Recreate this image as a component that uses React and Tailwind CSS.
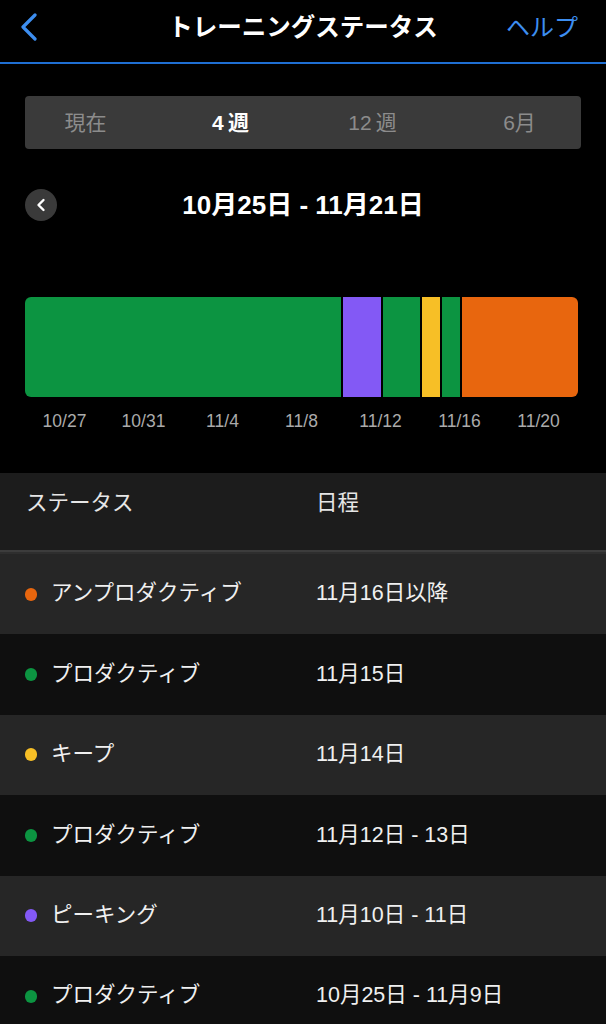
import React from 'react';

const FONT = { fontFamily: '"Liberation Sans", "Noto Sans CJK JP", sans-serif' };

const segments = [
  { days: 16, color: 'bg-[#0c9441]', round: 'rounded-l-[6px]' },
  { days: 2, color: 'bg-[#8359f5] border-l-[2px] border-black', round: '' },
  { days: 2, color: 'bg-[#0c9441] border-l-[2px] border-black', round: '' },
  { days: 1, color: 'bg-[#f7bf26] border-l-[2px] border-black', round: '' },
  { days: 1, color: 'bg-[#0c9441] border-l-[2px] border-black', round: '' },
  { days: 6, color: 'bg-[#e8660e] border-l-[2px] border-black', round: 'rounded-r-[6px]' },
];

const ticks = ['10/27', '10/31', '11/4', '11/8', '11/12', '11/16', '11/20'];

const rows = [
  { dot: 'bg-[#e8660e]', label: 'アンプロダクティブ', date: '11月16日以降' },
  { dot: 'bg-[#0c9441]', label: 'プロダクティブ', date: '11月15日' },
  { dot: 'bg-[#f7bf26]', label: 'キープ', date: '11月14日' },
  { dot: 'bg-[#0c9441]', label: 'プロダクティブ', date: '11月12日 - 13日' },
  { dot: 'bg-[#8359f5]', label: 'ピーキング', date: '11月10日 - 11日' },
  { dot: 'bg-[#0c9441]', label: 'プロダクティブ', date: '10月25日 - 11月9日' },
];

export default function App() {
  return (
    <div className="w-[606px] h-[1024px] overflow-hidden bg-black text-white" style={FONT}>
      {/* nav bar */}
      <div className="h-[62px] grid grid-cols-[1fr_auto_1fr] items-center px-[20px]">
        <svg width="18" height="30" viewBox="0 0 18 30" className="-mt-[6px]">
          <polyline points="15,2 3,14 15,26" fill="none" stroke="#3d8ef0" strokeWidth="3.2" strokeLinecap="round" strokeLinejoin="round" />
        </svg>
        <div className="text-[24.5px] font-bold leading-none -mt-[6px]">トレーニングステータス</div>
        <div className="text-[24px] leading-none text-[#3d8ef0] -mt-[6px] mr-[8px] text-right">ヘルプ</div>
      </div>
      <div className="h-[2px] bg-[#1f6fd3]" />

      {/* range tabs */}
      <div className="px-[25px] pt-[32px]">
        <div className="h-[53px] rounded-[4px] bg-[#3a3a3a] grid grid-cols-4 items-center text-[21px] leading-none">
          <div className="text-center text-[#8c8c8c] -ml-[18px]">現在</div>
          <div className="text-center font-bold text-white -ml-[6px]">4&#8201;週</div>
          <div className="text-center text-[#8c8c8c]">12&#8201;週</div>
          <div className="text-center text-[#8c8c8c] ml-[16px]">6月</div>
        </div>
      </div>

      {/* date range */}
      <div className="px-[25px] pt-[40px] flex items-center">
        <div className="w-[32px] h-[32px] rounded-full bg-[#3a3a3a] flex items-center justify-center">
          <svg width="10" height="14" viewBox="0 0 10 14">
            <polyline points="7.5,2 2.5,7 7.5,12" fill="none" stroke="#ffffff" strokeWidth="2.4" strokeLinecap="round" strokeLinejoin="round" />
          </svg>
        </div>
        <div className="flex-1 text-center text-[26px] font-bold leading-none -ml-[32px]">10月25日 - 11月21日</div>
      </div>

      {/* bar */}
      <div className="px-[25px] pt-[76px]">
        <div className="h-[100px] flex w-[553px]">
          {segments.map((s, i) => (
            <div key={i} className={`h-full ${s.color} ${s.round}`} style={{ width: `${(s.days / 28) * 100}%` }} />
          ))}
        </div>
        <div className="grid grid-cols-7 w-[553px] pt-[13px] text-[17.5px] leading-[22px] text-[#ababab]">
          {ticks.map((t) => (
            <div key={t} className="text-center">{t}</div>
          ))}
        </div>
      </div>

      {/* table */}
      <div className="mt-[41px]">
        <div className="h-[77px] bg-[#1c1c1c] flex pt-[18px] text-[21.5px] leading-[24px] text-[#e6e6e6]">
          <div className="w-[316px] pl-[26px]">ステータス</div>
          <div>日程</div>
        </div>
        <div className="h-[4px] bg-[#2e2e2e] border-t-[2px] border-[#3c3c3c]" />
        {rows.map((r, i) => (
          <div
            key={i}
            className={`h-[80.4px] flex items-center text-[21.5px] leading-none text-[#f0f0f0] ${i % 2 === 0 ? 'bg-[#262626]' : 'bg-[#0f0f0f]'}`}
          >
            <div className="w-[316px] pl-[25px] flex items-center">
              <span className={`w-[12px] h-[13px] rounded-full ${r.dot}`} />
              <span className="ml-[14px]">{r.label}</span>
            </div>
            <div>{r.date}</div>
          </div>
        ))}
      </div>
    </div>
  );
}
